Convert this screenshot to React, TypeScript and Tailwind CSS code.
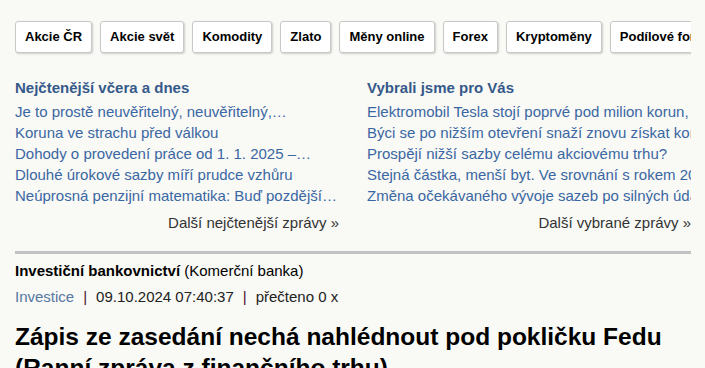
const tabs = ['Akcie ČR', 'Akcie svět', 'Komodity', 'Zlato', 'Měny online', 'Forex', 'Kryptoměny', 'Podílové fondy'];

const mostRead = [
  'Je to prostě neuvěřitelný, neuvěřitelný,…',
  'Koruna ve strachu před válkou',
  'Dohody o provedení práce od 1. 1. 2025 –…',
  'Dlouhé úrokové sazby míří prudce vzhůru',
  'Neúprosná penzijní matematika: Buď pozdější…',
];

const picked = [
  'Elektromobil Tesla stojí poprvé pod milion korun, je to trik',
  'Býci se po nižším otevření snaží znovu získat kontrolu',
  'Prospějí nižší sazby celému akciovému trhu?',
  'Stejná částka, menší byt. Ve srovnání s rokem 2015',
  'Změna očekávaného vývoje sazeb po silných údajích',
];

function NewsColumn({ title, items, more }: { title: string; items: string[]; more: string }) {
  return (
    <div className="flex flex-col min-w-0">
      <h3 className="text-[15px] leading-[20px] font-bold text-[#35598a] pb-[3px] whitespace-nowrap">{title}</h3>
      <ul className="flex flex-col">
        {items.map((t) => (
          <li key={t} className="text-[15px] leading-[21px] text-[#3a67a3] whitespace-nowrap">
            {t}
          </li>
        ))}
      </ul>
      <div className="text-right text-[15px] leading-[21px] text-[#333333] mt-[6px] whitespace-nowrap">{more}</div>
    </div>
  );
}

export default function App() {
  return (
    <div className="w-[705px] h-[368px] overflow-hidden bg-[#f9f9f5]" style={{ fontFamily: '"Liberation Sans", Arial, sans-serif' }}>
      <div className="ml-[15px] w-[676px] overflow-hidden">
        {/* Tabs */}
        <div className="flex gap-[8px] pt-[21px] whitespace-nowrap">
          {tabs.map((t) => (
            <div
              key={t}
              className="shrink-0 h-[32px] px-[9px] flex items-center bg-white border border-[#c8c8c8] rounded-[3px] shadow-[1px_1px_2px_rgba(0,0,0,0.18)] text-[13px] font-bold text-black"
            >
              {t}
            </div>
          ))}
        </div>

        {/* News columns */}
        <div className="grid grid-cols-[324px_324px] gap-[28px] mt-[25px]">
          <NewsColumn title="Nejčtenější včera a dnes" items={mostRead} more="Další nejčtenější zprávy »" />
          <NewsColumn title="Vybrali jsme pro Vás" items={picked} more="Další vybrané zprávy »" />
        </div>

        <div className="h-[3px] bg-[#c2c2c2] mt-[18px]" />

        {/* Article */}
        <div className="mt-[7px]">
          <p className="text-[15px] leading-[20px] text-black">
            <span className="font-bold">Investiční bankovnictví</span> (Komerční banka)
          </p>
          <p className="text-[15px] leading-[20px] text-[#222] mt-[6px] flex">
            <span className="text-[#5577a3]">Investice</span>
            <span className="text-[#4a1030] mx-[9px]">|</span>
            <span>09.10.2024 07:40:37</span>
            <span className="text-[#4a1030] mx-[9px]">|</span>
            <span>přečteno 0 x</span>
          </p>
          <h1 className="text-[24.5px] leading-[31px] font-bold text-black mt-[14px]">
            Zápis ze zasedání nechá nahlédnout pod pokličku Fedu (Ranní zpráva z finančního trhu)
          </h1>
        </div>
      </div>
    </div>
  );
}
